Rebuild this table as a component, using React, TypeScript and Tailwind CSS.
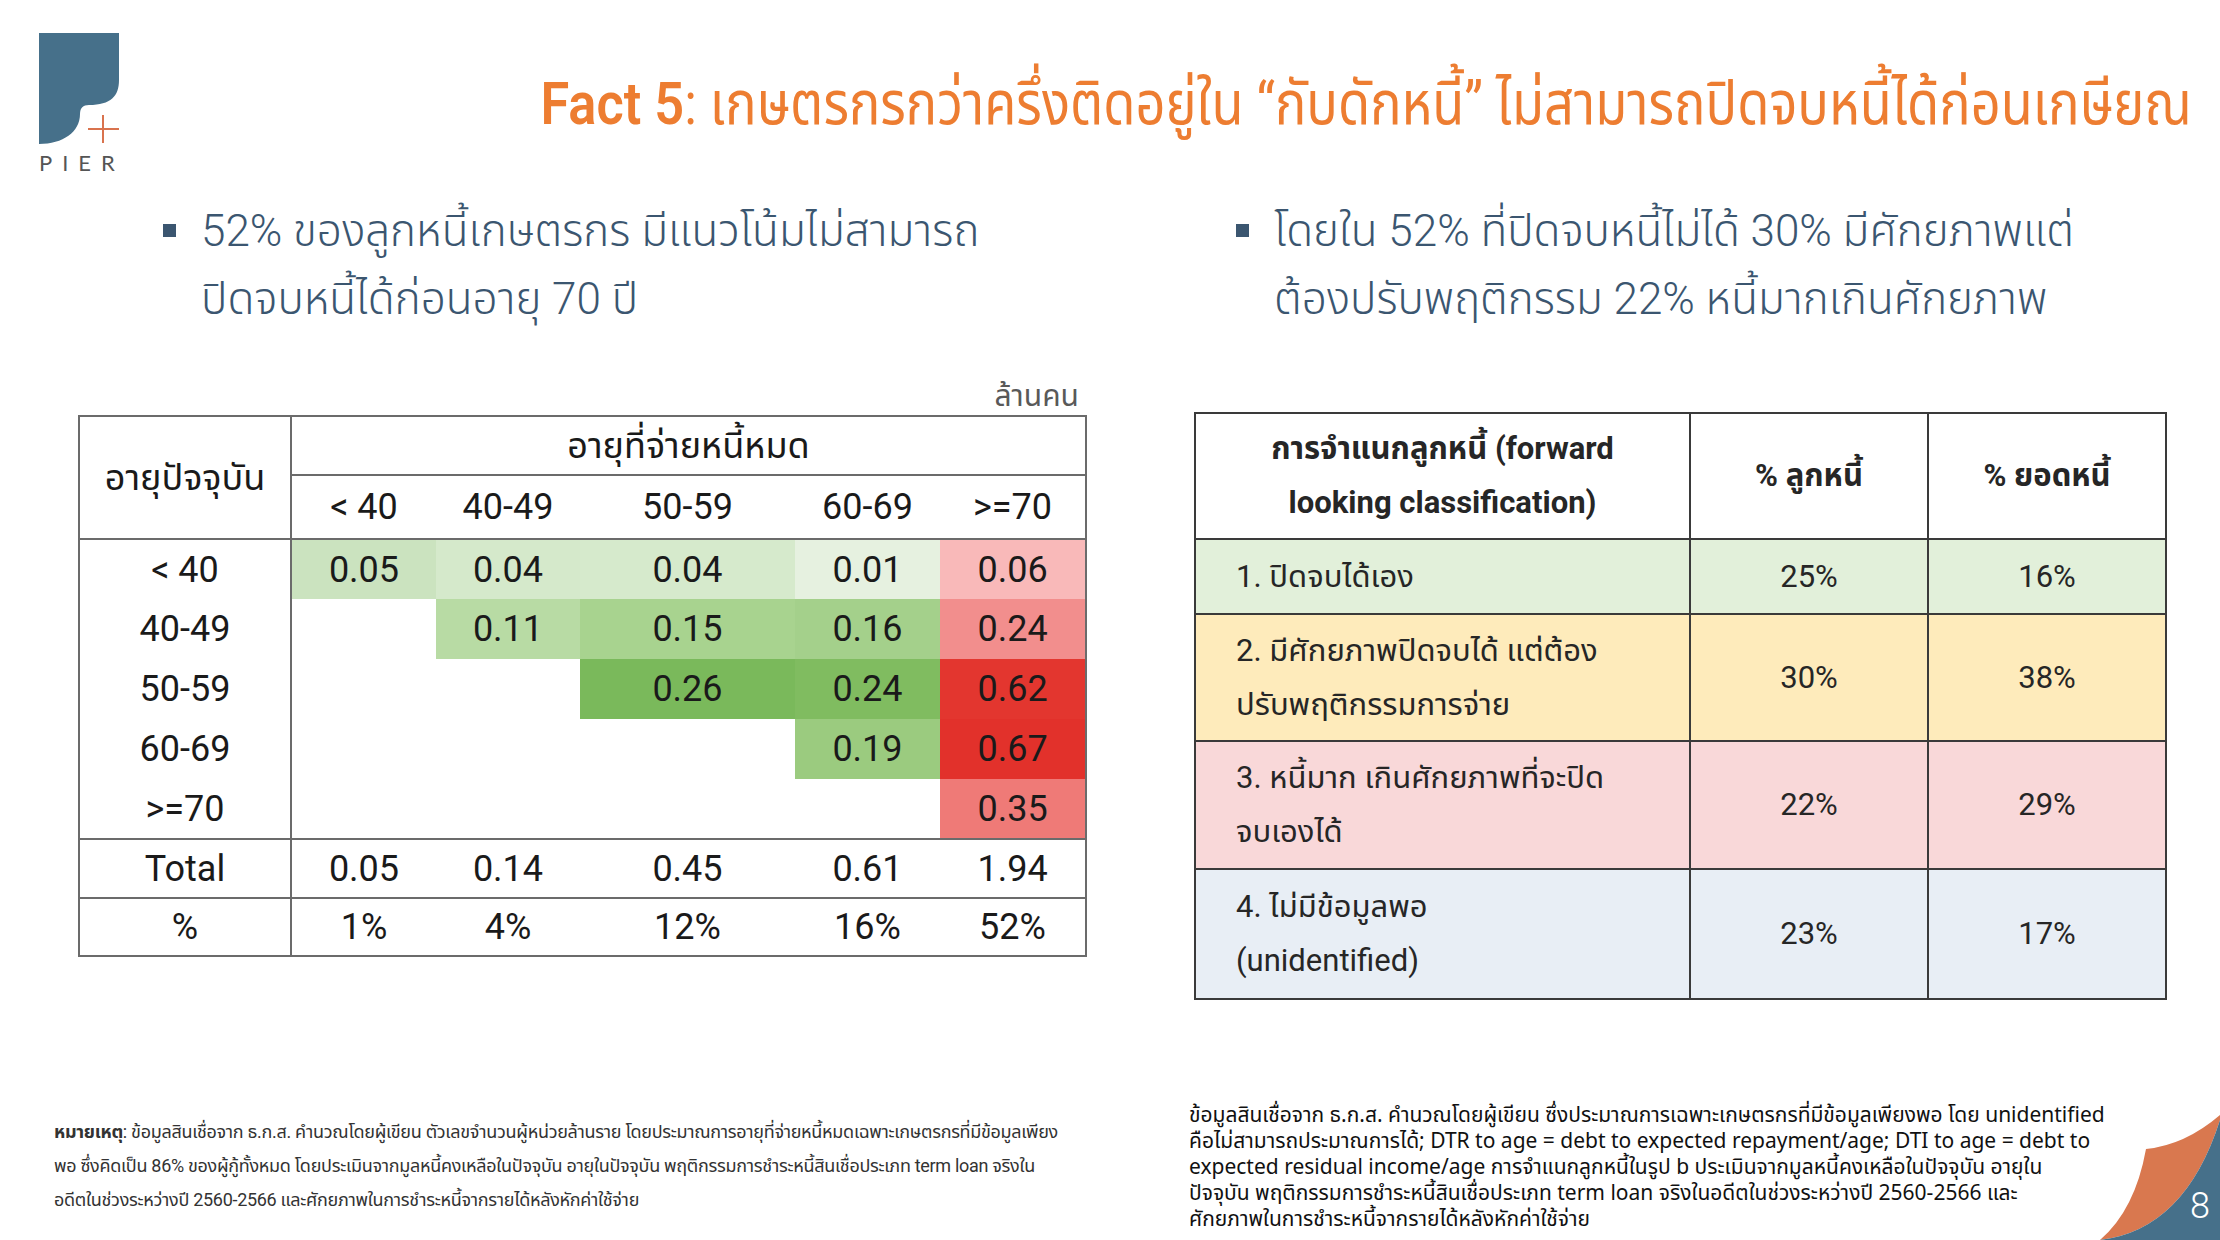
import React from "react";

const FONT = { fontFamily: '"Roboto", "Noto Sans Thai", "Noto Sans", "Liberation Sans", sans-serif' };

function Logo() {
  return (
    <div className="flex flex-col items-start">
      <svg width="82" height="112" viewBox="0 0 82 112">
        <path d="M0 0 H80 V47 C80 63 72 72 50 72 C44 72 41 75 41 81 C41 99 24 111 0 111 Z" fill="#46708a" />
        <line x1="49" y1="96" x2="80" y2="96" stroke="#d9734e" strokeWidth="2" />
        <line x1="64" y1="82" x2="64" y2="110" stroke="#d9734e" strokeWidth="2" />
      </svg>
      <div className="mt-[7px] text-[22px] leading-[22px] tracking-[10px] text-[#555555]" style={{ fontFamily: '"Lato", "Liberation Sans", sans-serif' }}>
        PIER
      </div>
    </div>
  );
}

function Bullet({ lines }: { lines: string[] }) {
  return (
    <div className="flex items-start">
      <div className="w-[13px] h-[13px] bg-[#3b5670] mt-[27px] mr-[25px] shrink-0" />
      <div className="text-[44px] leading-[68px] text-[#3b5670] font-light">
        {lines.map((l, i) => (
          <div key={i} className="whitespace-nowrap">{l}</div>
        ))}
      </div>
    </div>
  );
}

const heat: (null | { v: string; c: string })[][] = [
  [{ v: "0.05", c: "#cbe3bf" }, { v: "0.04", c: "#d5e9cb" }, { v: "0.04", c: "#d6eacc" }, { v: "0.01", c: "#e6f1e0" }, { v: "0.06", c: "#f9b9b9" }],
  [null, { v: "0.11", c: "#b8dba4" }, { v: "0.15", c: "#a8d38f" }, { v: "0.16", c: "#a4d08b" }, { v: "0.24", c: "#f28e8d" }],
  [null, null, { v: "0.26", c: "#7ab95b" }, { v: "0.24", c: "#80bc60" }, { v: "0.62", c: "#e3362f" }],
  [null, null, null, { v: "0.19", c: "#9bcb7f" }, { v: "0.67", c: "#e2312b" }],
  [null, null, null, null, { v: "0.35", c: "#ef7a77" }],
];
const rowLabels = ["< 40", "40-49", "50-59", "60-69", ">=70"];
const colWidths = [212, 145, 144, 215, 145, 146];

function HeatTable() {
  return (
    <table className="border-collapse text-[36px] leading-[44px] text-[#1a1a1a] table-fixed" style={{ width: 1007 }}>
      <colgroup>
        {colWidths.map((w, i) => (
          <col key={i} style={{ width: w }} />
        ))}
      </colgroup>
      <tbody>
        <tr className="h-[59px]">
          <td rowSpan={2} className="border-2 border-[#6b6b6b] text-center align-middle">อายุปัจจุบัน</td>
          <td colSpan={5} className="border-2 border-[#6b6b6b] text-center">อายุที่จ่ายหนี้หมด</td>
        </tr>
        <tr className="h-[64px]">
          {["< 40", "40-49", "50-59", "60-69", ">=70"].map((h, i) => (
            <td key={i} className={`text-center border-b-2 border-[#6b6b6b] ${i === 4 ? "border-r-2" : ""}`}>{h}</td>
          ))}
        </tr>
        {heat.map((row, r) => (
          <tr key={r} className="h-[60px]">
            <td className={`text-center border-l-2 border-r-2 border-[#6b6b6b] ${r === 4 ? "border-b-2" : ""}`}>{rowLabels[r]}</td>
            {row.map((cell, c) => (
              <td
                key={c}
                className={`text-center ${c === 4 ? "border-r-2 border-[#6b6b6b]" : ""} ${r === 4 ? "border-b-2 border-[#6b6b6b]" : ""}`}
                style={cell ? { backgroundColor: cell.c } : undefined}
              >
                {cell ? cell.v : ""}
              </td>
            ))}
          </tr>
        ))}
        <tr className="h-[59px]">
          <td className="text-center border-2 border-[#6b6b6b]">Total</td>
          {["0.05", "0.14", "0.45", "0.61", "1.94"].map((v, i) => (
            <td key={i} className={`text-center border-b-2 border-[#6b6b6b] ${i === 4 ? "border-r-2" : ""}`}>{v}</td>
          ))}
        </tr>
        <tr className="h-[58px]">
          <td className="text-center border-2 border-[#6b6b6b]">%</td>
          {["1%", "4%", "12%", "16%", "52%"].map((v, i) => (
            <td key={i} className={`text-center border-b-2 border-[#6b6b6b] ${i === 4 ? "border-r-2" : ""}`}>{v}</td>
          ))}
        </tr>
      </tbody>
    </table>
  );
}

const classRows = [
  { label: ["1. ปิดจบได้เอง"], a: "25%", b: "16%", bg: "#e2f0da", h: 75 },
  { label: ["2. มีศักยภาพปิดจบได้ แต่ต้อง", "ปรับพฤติกรรมการจ่าย"], a: "30%", b: "38%", bg: "#feebbb", h: 127 },
  { label: ["3. หนี้มาก เกินศักยภาพที่จะปิด", "จบเองได้"], a: "22%", b: "29%", bg: "#f9d8d9", h: 128 },
  { label: ["4. ไม่มีข้อมูลพอ", "(unidentified)"], a: "23%", b: "17%", bg: "#e8eef5", h: 130 },
];

function ClassTable() {
  return (
    <table className="border-collapse table-fixed text-[31px] leading-[40px] text-[#262626]" style={{ width: 971 }}>
      <colgroup>
        <col style={{ width: 495 }} />
        <col style={{ width: 238 }} />
        <col style={{ width: 238 }} />
      </colgroup>
      <tbody>
        <tr className="h-[126px]">
          <td className="border-2 border-[#3a3a3a] text-center font-bold leading-[54px]">
            การจำแนกลูกหนี้ (forward
            <br />
            looking classification)
          </td>
          <td className="border-2 border-[#3a3a3a] text-center font-bold">% ลูกหนี้</td>
          <td className="border-2 border-[#3a3a3a] text-center font-bold">% ยอดหนี้</td>
        </tr>
        {classRows.map((r, i) => (
          <tr key={i} style={{ height: r.h, backgroundColor: r.bg }}>
            <td className="border-2 border-[#3a3a3a] pl-[40px] leading-[54px]">
              {r.label.map((l, j) => (
                <div key={j} className="whitespace-nowrap">{l}</div>
              ))}
            </td>
            <td className="border-2 border-[#3a3a3a] text-center">{r.a}</td>
            <td className="border-2 border-[#3a3a3a] text-center">{r.b}</td>
          </tr>
        ))}
      </tbody>
    </table>
  );
}

const noteLeft = [
  "ข้อมูลสินเชื่อจาก ธ.ก.ส. คำนวณโดยผู้เขียน ตัวเลขจำนวนผู้หน่วยล้านราย โดยประมาณการอายุที่จ่ายหนี้หมดเฉพาะเกษตรกรที่มีข้อมูลเพียง",
  "พอ ซึ่งคิดเป็น 86% ของผู้กู้ทั้งหมด โดยประเมินจากมูลหนี้คงเหลือในปัจจุบัน อายุในปัจจุบัน พฤติกรรมการชำระหนี้สินเชื่อประเภท term loan จริงใน",
  "อดีตในช่วงระหว่างปี 2560-2566 และศักยภาพในการชำระหนี้จากรายได้หลังหักค่าใช้จ่าย",
];

const noteRight = [
  "ข้อมูลสินเชื่อจาก ธ.ก.ส. คำนวณโดยผู้เขียน ซึ่งประมาณการเฉพาะเกษตรกรที่มีข้อมูลเพียงพอ โดย unidentified",
  "คือไม่สามารถประมาณการได้; DTR to age = debt to expected repayment/age; DTI to age = debt to",
  "expected residual income/age การจำแนกลูกหนี้ในรูป b ประเมินจากมูลหนี้คงเหลือในปัจจุบัน อายุใน",
  "ปัจจุบัน พฤติกรรมการชำระหนี้สินเชื่อประเภท term loan จริงในอดีตในช่วงระหว่างปี 2560-2566 และ",
  "ศักยภาพในการชำระหนี้จากรายได้หลังหักค่าใช้จ่าย",
];

export default function App() {
  return (
    <div className="relative w-[2220px] h-[1240px] overflow-hidden bg-white" style={FONT}>
      <header className="flex items-start justify-between h-[197px]">
        <div className="ml-[39px] mt-[33px]">
          <Logo />
        </div>
        <div className="mt-[64px] mr-[28px] text-[60px] leading-[80px] text-[#ed7d31] whitespace-nowrap origin-right scale-x-[0.872]">
          <span className="font-semibold">Fact 5</span>: เกษตรกรกว่าครึ่งติดอยู่ใน “กับดักหนี้” ไม่สามารถปิดจบหนี้ได้ก่อนเกษียณ
        </div>
      </header>

      <div className="flex">
        <div className="w-[1140px] shrink-0 flex flex-col">
          <div className="pl-[163px]">
            <Bullet lines={["52% ของลูกหนี้เกษตรกร มีแนวโน้มไม่สามารถ", "ปิดจบหนี้ได้ก่อนอายุ 70 ปี"]} />
          </div>
          <div className="ml-[78px] w-[1007px] mt-[45px] flex flex-col">
            <div className="text-right text-[30px] leading-[36px] text-[#595959] pr-[6px] mb-[1px]">ล้านคน</div>
            <HeatTable />
          </div>
          <div className="ml-[54px] mt-[158px] text-[18px] leading-[34px] tracking-[-0.3px] text-[#333333]">
            {noteLeft.map((l, i) => (
              <div key={i} className="whitespace-nowrap">
                {i === 0 ? <><span className="font-bold">หมายเหตุ</span>: </> : null}
                {l}
              </div>
            ))}
          </div>
        </div>

        <div className="flex-1 flex flex-col">
          <div className="pl-[96px]">
            <Bullet lines={["โดยใน 52% ที่ปิดจบหนี้ไม่ได้ 30% มีศักยภาพแต่", "ต้องปรับพฤติกรรม 22% หนี้มากเกินศักยภาพ"]} />
          </div>
          <div className="ml-[54px] mt-[79px]">
            <ClassTable />
          </div>
          <div className="ml-[49px] mt-[103px] text-[21px] leading-[26px] text-[#111111]" style={{ fontFamily: '"Noto Sans Thai", "Noto Sans", "Open Sans", sans-serif' }}>
            {noteRight.map((l, i) => (
              <div key={i} className="whitespace-nowrap">{l}</div>
            ))}
          </div>
        </div>
      </div>

      <div className="absolute right-0 bottom-0 w-[130px] h-[140px]">
        <svg width="130" height="140" viewBox="0 0 130 140" className="absolute inset-0">
          <path d="M56 49 Q95 45 130 15 L130 20 Q95 130 10 140 Q45 110 56 49 Z" fill="#d9784f" />
          <path d="M10 140 Q95 130 130 20 L130 140 Z" fill="#46708a" />
        </svg>
        <div className="absolute right-[10px] bottom-[16px] text-[36px] leading-[36px] text-white font-light">8</div>
      </div>
    </div>
  );
}
